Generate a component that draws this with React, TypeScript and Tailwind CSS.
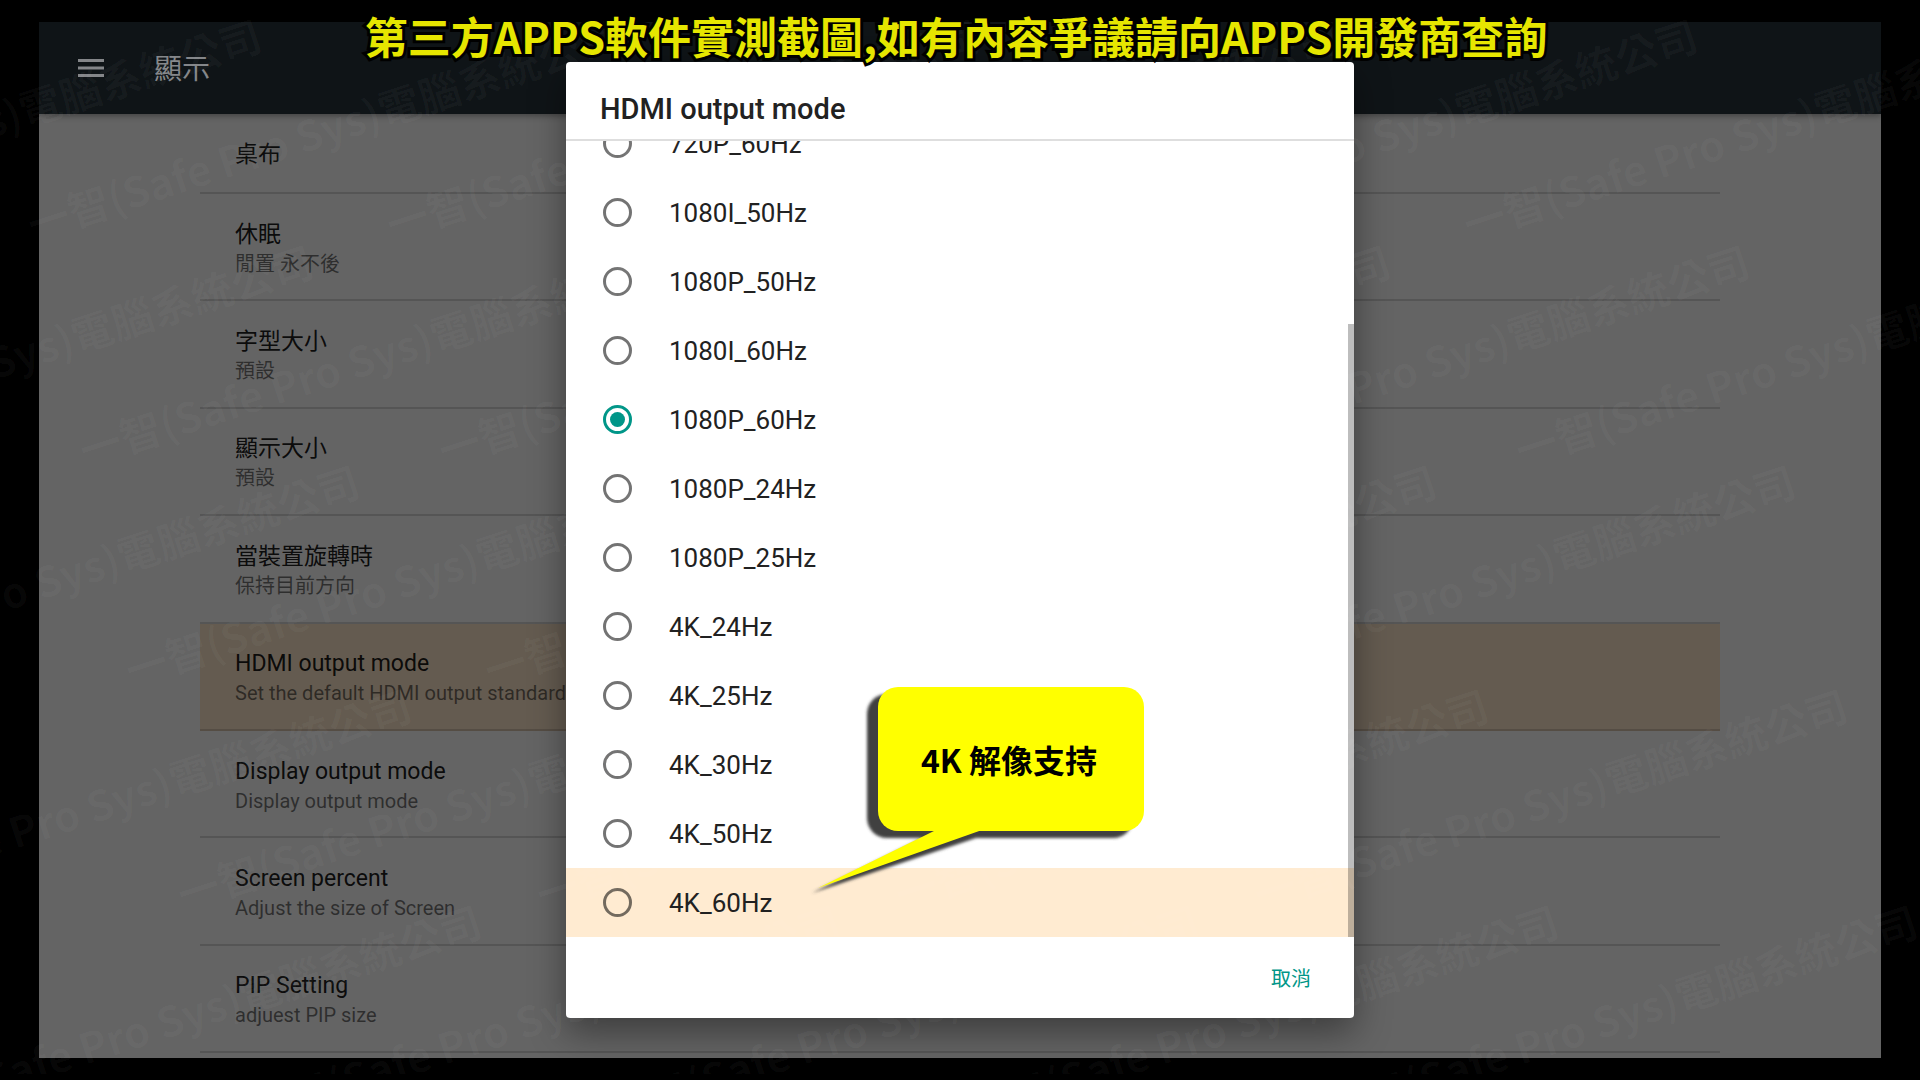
import { useState } from "react";

interface Setting {
  title: string;
  summary: string;
}

const SETTINGS: Setting[] = [
  { title: "休眠", summary: "閒置 永不後" },
  { title: "字型大小", summary: "預設" },
  { title: "顯示大小", summary: "預設" },
  { title: "當裝置旋轉時", summary: "保持目前方向" },
  { title: "HDMI output mode", summary: "Set the default HDMI output standard" },
  { title: "Display output mode", summary: "Display output mode" },
  { title: "Screen percent", summary: "Adjust the size of Screen" },
  { title: "PIP Setting", summary: "adjuest PIP size" },
];

const MODES = [
  "720P_60Hz",
  "1080I_50Hz",
  "1080P_50Hz",
  "1080I_60Hz",
  "1080P_60Hz",
  "1080P_24Hz",
  "1080P_25Hz",
  "4K_24Hz",
  "4K_25Hz",
  "4K_30Hz",
  "4K_50Hz",
  "4K_60Hz",
];

const FOCUSED_SETTING = "HDMI output mode";
const FOCUSED_MODE = "4K_60Hz";

// Each row of stamps sits a little to the right of the one above.
const STAMP_ROWS = [
  { x: 28, y: 204, count: 6 },
  { x: 80, y: 430, count: 6 },
  { x: 126, y: 650, count: 5 },
  { x: 178, y: 874, count: 5 },
  { x: 248, y: 1090, count: 5 },
];
const STAMPS = STAMP_ROWS.flatMap(({ x, y, count }) =>
  Array.from({ length: count }, (_, i) => ({ left: x + (i - 1) * 359, top: y }))
);

function Header() {
  return (
    <header className="relative flex h-[92px] shrink-0 items-center bg-[#0f1417] pl-[38px] shadow-[0_2px_6px_rgba(0,0,0,0.35)]">
      <button type="button" aria-label="Menu" className="text-[#848689]">
        <svg width="28" height="20" viewBox="0 0 28 20" fill="currentColor">
          <path d="M1 1h26v3H1zM1 8.500h26v3H1zM1 16h26v3H1z" />
        </svg>
      </button>
      <h1 className="pt-1 pl-[49px] text-[28px] leading-8 text-[#848689]">顯示</h1>
    </header>
  );
}

function SettingRow({ title, summary }: Setting) {
  const focused = title === FOCUSED_SETTING;

  return (
    <li
      className={`flex flex-1 flex-col justify-center border-b-2 border-black/15 px-[35px] pt-1 ${
        focused ? "bg-[#645b50]" : ""
      }`}
    >
      <span className="text-[23px] leading-[30px] text-black/90">{title}</span>
      <span className="text-[20px] leading-7 text-black/55">{summary}</span>
    </li>
  );
}

function Callout() {
  return (
    <div className="pointer-events-none absolute top-[620px] left-[240px] h-[220px] w-[344px]">
      <svg className="absolute inset-0" width="344" height="220" viewBox="0 0 344 220">
        <defs>
          <filter id="soft" x="-10%" y="-10%" width="120%" height="120%">
            <feGaussianBlur stdDeviation="1.5" />
          </filter>
        </defs>
        <g fill="#404040" filter="url(#soft)">
          <rect x="61" y="12" width="266" height="144" rx="20" />
          <path d="M125 152 6 211 176 154z" />
        </g>
        <g fill="#ffff00">
          <rect x="72" y="5" width="266" height="144" rx="20" />
          <path d="M130 148 12 206 176 148z" />
        </g>
      </svg>
      <p className="relative ml-[72px] flex h-[154px] w-[266px] items-center justify-center pr-1 text-[32px] leading-none font-bold text-black font-['Noto_Sans_CJK_TC',sans-serif]">
        4K 解像支持
      </p>
    </div>
  );
}

function OutputModeDialog() {
  const [mode, setMode] = useState("1080P_60Hz");

  return (
    <div className="absolute inset-0 flex justify-center py-[62px]">
      <div
        role="dialog"
        aria-labelledby="dialog-title"
        className="relative flex h-full w-[788px] flex-col rounded-[4px] bg-white shadow-[0_14px_36px_rgba(0,0,0,0.4)]"
      >
        <h2
          id="dialog-title"
          className="flex h-[79px] shrink-0 items-center border-b-2 border-[#dedede] px-[34px] pt-4 text-[29px] leading-8 font-medium text-[#212121]"
        >
          HDMI output mode
        </h2>

        <div className="relative flex min-h-0 flex-1 flex-col justify-end overflow-hidden">
          {MODES.map((m) => (
            <label
              key={m}
              className={`flex h-[69px] shrink-0 items-center gap-[37px] pl-[37px] text-[26px] leading-8 text-[#212121] ${
                m === FOCUSED_MODE ? "bg-[#ffebd1]" : ""
              }`}
            >
              <input
                type="radio"
                name="mode"
                value={m}
                checked={mode === m}
                onChange={() => setMode(m)}
                className="grid size-[29px] shrink-0 appearance-none place-items-center rounded-full border-3 border-black/55 checked:border-[#009688] checked:before:size-[15px] checked:before:rounded-full checked:before:bg-[#009688]"
              />
              {m}
            </label>
          ))}
          <div className="absolute right-0 bottom-0 h-[77%] w-1.5 bg-black/26" />
        </div>

        <div className="flex h-[81px] shrink-0 items-center justify-end pt-0.5 pr-[43px]">
          <button type="button" className="text-[20px] leading-8 text-[#009688]">
            取消
          </button>
        </div>
      </div>
    </div>
  );
}

function Watermark() {
  return (
    <div aria-hidden className="pointer-events-none absolute inset-x-0 top-0 bottom-1.5 overflow-hidden">
      {STAMPS.map((s) => (
        <span
          key={`${s.left}-${s.top}`}
          style={{ left: s.left, top: s.top }}
          className="absolute origin-left -rotate-18 text-[42px] leading-10 font-bold whitespace-nowrap text-white/3 font-['Noto_Sans_CJK_TC',sans-serif]"
        >
          一智(Safe Pro Sys)電腦系統公司
        </span>
      ))}
    </div>
  );
}

export default function App() {
  return (
    <div className="relative flex h-screen flex-col overflow-hidden bg-black px-[39px] py-[22px] font-[Roboto,'Noto_Sans_CJK_TC',sans-serif]">
      <div className="flex min-h-0 flex-1 flex-col bg-[#646464] pb-[5px]">
        <Header />
        <ul className="mx-[161px] flex min-h-0 flex-1 flex-col">
          <li className="flex h-20 shrink-0 items-center border-b-2 border-black/15 px-[35px] pt-1 text-[23px] leading-[30px] text-black/90">
            桌布
          </li>
          {SETTINGS.map((s) => (
            <SettingRow key={s.title} {...s} />
          ))}
        </ul>
      </div>

      <OutputModeDialog />
      <Watermark />

      <div className="pointer-events-none absolute inset-0 flex justify-center py-[62px]">
        <div className="relative w-[788px]">
          <Callout />
        </div>
      </div>

      <p className="absolute inset-x-0 top-[13px] pr-2 text-center text-[43px] leading-11 font-bold text-[#e6e600] font-['Noto_Sans_CJK_TC',sans-serif] [-webkit-text-stroke:6px_black] [paint-order:stroke_fill]">
        第三方APPS軟件實測截圖,如有內容爭議請向APPS開發商查詢
      </p>
    </div>
  );
}
